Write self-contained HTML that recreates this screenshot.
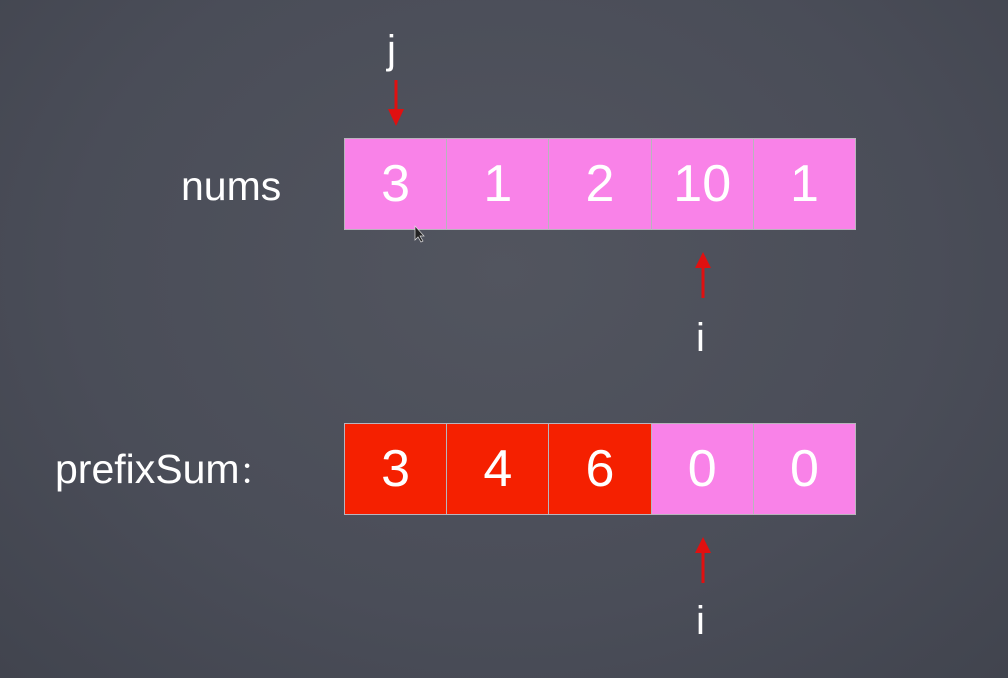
<!DOCTYPE html><html><head><style>
body{margin:0;width:1008px;height:678px;overflow:hidden;background:radial-gradient(ellipse at 50% 40%,#52555f 0%,#4a4d58 60%,#41444e 100%);font-family:"Liberation Sans",sans-serif;color:#fff;position:relative}
.t{position:absolute;line-height:1}
.row{position:absolute;left:344px;width:512px;height:92px;display:flex;border:1px solid #b9b4bd;box-sizing:border-box;background:#b9b4bd;gap:1px}
.c{flex:1;display:flex;align-items:center;justify-content:center;font-size:52px;background:#f982e8}
.r{background:#f52000}
</style></head><body>
<div class="t" style="left:387px;top:30px;font-size:40px">j</div>
<div class="t" style="left:181px;top:166px;font-size:41px">nums</div>
<div class="t" style="left:55px;top:449px;font-size:41px">prefixSum<span style="font-size:30px">：</span></div>
<div class="row" style="top:138px"><div class="c">3</div><div class="c">1</div><div class="c">2</div><div class="c">10</div><div class="c">1</div></div>
<div class="row" style="top:423px"><div class="c r">3</div><div class="c r">4</div><div class="c r">6</div><div class="c">0</div><div class="c">0</div></div>
<div class="t" style="left:696px;top:318px;font-size:40px">i</div>
<div class="t" style="left:696px;top:601px;font-size:40px">i</div>
<svg width="1008" height="678" style="position:absolute;left:0;top:0">
<g fill="#e01010" stroke="#e01010" stroke-width="3">
<line x1="396" y1="80" x2="396" y2="112"/><polygon points="388,109 404,109 396,126" stroke="none"/>
<line x1="703" y1="298" x2="703" y2="266"/><polygon points="695,268 711,268 703,252" stroke="none"/>
<line x1="703" y1="583" x2="703" y2="551"/><polygon points="695,553 711,553 703,537" stroke="none"/>
</g>
<polygon points="415,226 415,240 418,237 421,242 423,241 420,236 424,236" fill="#222" stroke="#ddd" stroke-width="0.7"/>
</svg>
</body></html>
